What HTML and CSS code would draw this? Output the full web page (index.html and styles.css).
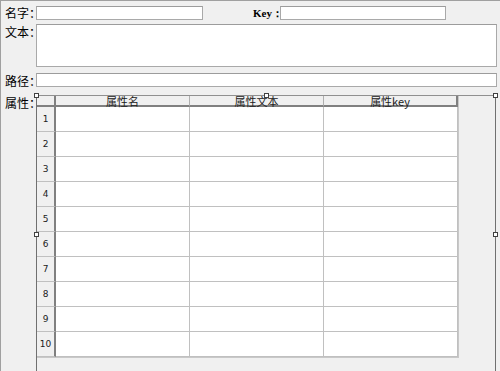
FILE: index.html
```html
<!DOCTYPE html>
<html>
<head>
<meta charset="utf-8">
<link rel="stylesheet" href="styles.css">
</head>
<body>
<div class="form">
  <div class="row row-name">
    <span class="label">名字：</span>
    <div class="input w-name"></div>
    <span class="label key">Key：</span>
    <div class="input w-key"></div>
  </div>
  <div class="row row-text">
    <span class="label">文本：</span>
    <div class="textarea"></div>
  </div>
  <div class="row row-path">
    <span class="label">路径：</span>
    <div class="input grow"></div>
  </div>
  <div class="row row-attr">
    <span class="label">属性：</span>
    <div class="frame">
      <span class="handle h-tl"></span>
      <span class="handle h-tm"></span>
      <span class="handle h-tr"></span>
      <span class="handle h-ml"></span>
      <span class="handle h-mr"></span>
      <div class="grid">
        <div class="corner"></div>
        <div class="colhead">属性名</div>
        <div class="colhead">属性文本</div>
        <div class="colhead">属性key</div>
        <div class="rowhead">1</div><div class="cell"></div><div class="cell"></div><div class="cell"></div>
        <div class="rowhead">2</div><div class="cell"></div><div class="cell"></div><div class="cell"></div>
        <div class="rowhead">3</div><div class="cell"></div><div class="cell"></div><div class="cell"></div>
        <div class="rowhead">4</div><div class="cell"></div><div class="cell"></div><div class="cell"></div>
        <div class="rowhead">5</div><div class="cell"></div><div class="cell"></div><div class="cell"></div>
        <div class="rowhead">6</div><div class="cell"></div><div class="cell"></div><div class="cell"></div>
        <div class="rowhead">7</div><div class="cell"></div><div class="cell"></div><div class="cell"></div>
        <div class="rowhead">8</div><div class="cell"></div><div class="cell"></div><div class="cell"></div>
        <div class="rowhead">9</div><div class="cell"></div><div class="cell"></div><div class="cell"></div>
        <div class="rowhead">10</div><div class="cell"></div><div class="cell"></div><div class="cell"></div>
      </div>
    </div>
  </div>
</div>
</body>
</html>
```

FILE: styles.css
```css
html, body {
  margin: 0;
  padding: 0;
  background: #f0f0f0;
  height: 100%;
  overflow: hidden;
}
body {
  font-family: "Noto Sans CJK SC", "DejaVu Sans", sans-serif;
  font-size: 12px;
  color: #000;
}
.form {
  box-sizing: border-box;
  height: 371px;
  border-top: 1px solid #a0a0a0;
  border-left: 1px solid #a0a0a0;
  padding-top: 5px;
}
.row {
  display: flex;
  align-items: flex-start;
}
.label {
  width: 31px;
  padding-left: 4px;
  line-height: 14px;
  font-size: 12px;
  white-space: nowrap;
}
.input, .textarea {
  box-sizing: border-box;
  background: #fff;
  border: 1px solid #a9a9a9;
  border-top-color: #9c9c9c;
}
.input { height: 14px; }
.w-name { width: 167px; }
.key {
  width: 27px;
  margin-left: 50px;
  padding-left: 0;
  font-family: "Liberation Serif", "DejaVu Serif", serif;
  font-weight: bold;
  font-size: 11px;
  line-height: 14px;
  overflow: visible;
}
.w-key { width: 166px; }
.row-text { margin-top: 4px; }
.row-text .label { line-height: 16px; }
.textarea { width: 461px; height: 43px; }
.row-path { margin-top: 6px; }
.row-path .label { line-height: 16px; }
.grow { width: 461px; }
.row-attr { margin-top: 6px; }
.row-attr .label { line-height: 14px; padding-top: 1px; }
.frame {
  position: relative;
  width: 460px;
  height: 279px;
  border-left: 1px solid #707070;
  border-right: 1px solid #707070;
  border-top: 1px solid #909090;
  box-sizing: border-box;
}
.handle {
  position: absolute;
  width: 5px;
  height: 5px;
  box-sizing: border-box;
  border: 1px solid #404040;
  background: #fff;
}
.h-tl { left: -3px; top: -3px; }
.h-tm { left: 227px; top: -3px; }
.h-tr { right: -3px; top: -3px; }
.h-ml { left: -3px; top: 136px; }
.h-mr { right: -3px; top: 136px; }
.grid {
  display: grid;
  grid-template-columns: 19px 134px 134px 134px;
  grid-template-rows: 11px repeat(10, 25px);
  width: max-content;
  background: #fff;
  border-right: 1px solid #c8c8c8;
  border-bottom: 1px solid #c8c8c8;
}
.corner {
  background: #f0f0f0;
  border-right: 2px solid #808080;
  border-bottom: 2px solid #808080;
}
.colhead {
  background: #f0f0f0;
  border-bottom: 2px solid #808080;
  border-right: 1px solid #b0b0b0;
  text-align: center;
  font-size: 11px;
  line-height: 10px;
  color: #202020;
}
.colhead:nth-child(4) { border-right: 2px solid #808080; }
.rowhead {
  background: #f0f0f0;
  border-right: 2px solid #808080;
  border-bottom: 1px solid #c0c0c0;
  display: flex;
  align-items: center;
  justify-content: center;
  font-family: "DejaVu Sans", sans-serif;
  font-size: 9px;
  color: #202020;
}
.cell {
  border-right: 1px solid #c0c0c0;
  border-bottom: 1px solid #c0c0c0;
}
```
